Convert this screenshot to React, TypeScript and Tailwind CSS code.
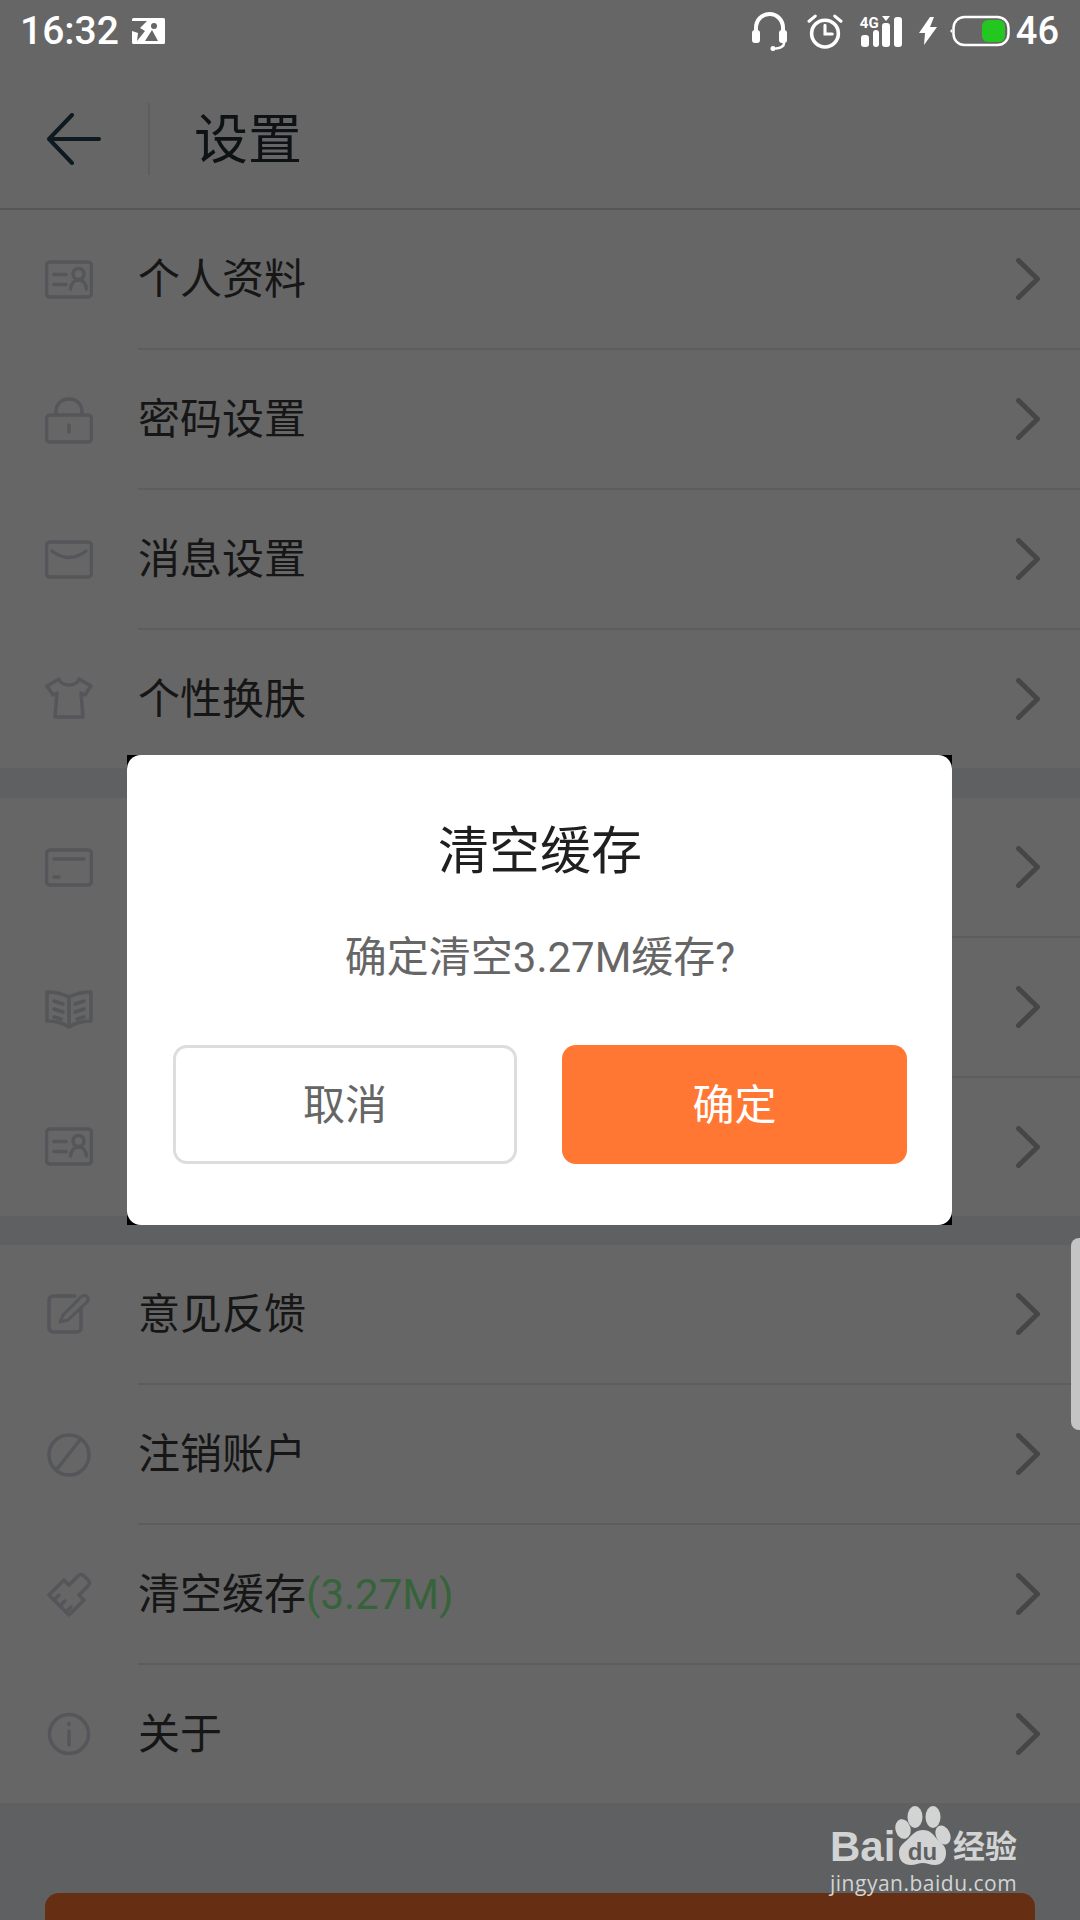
import type { ReactNode } from "react";

const Svg = ({ children }: { children: ReactNode }) => (
  <svg viewBox="0 0 48 48" className="w-[48px] h-[48px] shrink-0" fill="none" stroke="#55565a" strokeWidth="3.500" strokeLinecap="round" strokeLinejoin="round">
    {children}
  </svg>
);

const IdCard = () => (
  <Svg>
    <rect x="1.500" y="6" width="45" height="35" rx="3.500" />
    <path d="M9 18.500h12M9 28.500h12" />
    <circle cx="33.500" cy="18" r="5.500" />
    <path d="M25.500 33c.6-5.500 3.600-9 8-9s7.400 3.500 8 9" />
  </Svg>
);

const Lock = () => (
  <Svg>
    <rect x="1.500" y="19" width="45" height="27" rx="3.500" />
    <path d="M11 19v-3c0-8 5.500-13 13-13s13 5 13 13v3" />
    <path d="M24 29v7" />
  </Svg>
);

const Mail = () => (
  <Svg>
    <rect x="1.500" y="6" width="45" height="35" rx="3.500" />
    <path d="M7 15c5 4 11 6.500 17 6.500S36 19 41 15" />
  </Svg>
);

const Shirt = () => (
  <Svg>
    <path d="M14 4L2 11l6 9 4-2-2 24h28l-2-24 4 2 6-9-12-7c-1.500 4-5 6-10 6s-8.500-2-10-6z" />
  </Svg>
);

const Card = () => (
  <Svg>
    <rect x="1.500" y="6" width="45" height="35" rx="3.500" />
    <path d="M9 15h30M9 33h5" />
  </Svg>
);

const Book = () => (
  <Svg>
    <path d="M24 13c-6-3-14-5-22-5v29c8 0 16 2 22 6 6-4 14-6 22-6V8c-8 0-16 2-22 5zM24 13v30" />
    <path d="M9 17l9 3M9 25l9 3M9 33l7 2M39 17l-9 3M39 25l-9 3M39 33l-7 2" />
  </Svg>
);

const Edit = () => (
  <Svg>
    <path d="M30 5H8a4 4 0 0 0-4 4v28a4 4 0 0 0 4 4h24a4 4 0 0 0 4-4V17" />
    <path d="M15 31l3-7L36 6c2-2 4-2 6-.5 1.500 1.500 1.500 3.500 0 5.500L23 29l-8 2z" strokeWidth="3" />
  </Svg>
);

const Ban = () => (
  <Svg>
    <circle cx="24" cy="24" r="20" />
    <path d="M35 9L12 38" />
  </Svg>
);

const Brush = () => (
  <Svg>
    <path d="M4 24L19 9l5 5 9-9c2-2 4-2 6 0l4 4c2 2 2 4 0 6l-9 9 5 5-15 15z" />
    <path d="M10 30l5-5M16 36l5-5M22 42l5-5" transform="translate(-1 -1)" />
  </Svg>
);

const Info = () => (
  <Svg>
    <circle cx="24" cy="24" r="19.500" />
    <path d="M24 21v14" />
    <path d="M24 13.500v1" strokeWidth="3.500" />
  </Svg>
);

const Chevron = () => (
  <svg viewBox="0 0 24 42" className="w-[24px] h-[42px] shrink-0" fill="none" stroke="#464646" strokeWidth="5" strokeLinecap="round" strokeLinejoin="round">
    <path d="M2.500 2.500L21.500 21L2.500 39.500" />
  </svg>
);

type Item = { id: string; icon: ReactNode; label?: string; extra?: string };

const groupA: Item[] = [
  { id: "profile", icon: <IdCard />, label: "个人资料" },
  { id: "password", icon: <Lock />, label: "密码设置" },
  { id: "message", icon: <Mail />, label: "消息设置" },
  { id: "skin", icon: <Shirt />, label: "个性换肤" },
];

// labels of these rows are covered by the dialog
const groupB: Item[] = [
  { id: "card", icon: <Card /> },
  { id: "book", icon: <Book /> },
  { id: "id", icon: <IdCard /> },
];

const groupC: Item[] = [
  { id: "feedback", icon: <Edit />, label: "意见反馈" },
  { id: "close", icon: <Ban />, label: "注销账户" },
  { id: "cache", icon: <Brush />, label: "清空缓存", extra: "(3.27M)" },
  { id: "about", icon: <Info />, label: "关于" },
];

function Group({ items }: { items: Item[] }) {
  return (
    <div className="bg-[#666666]">
      {items.map((item, i) => {
        const last = i === items.length - 1;
        return (
          <div key={item.id} className={`flex items-center pl-[45px] ${last ? "h-[138px]" : "h-[140px]"}`}>
            {item.icon}
            <div className={`ml-[45px] flex-1 h-full flex items-center justify-between pr-[40px] ${last ? "" : "border-b-2 border-[#5d5d5d]"}`}>
              <span className="pt-[2px] text-[42px] leading-none text-[#161616]">
                {item.label}
                {item.extra && <span className="text-[#37633a]">{item.extra}</span>}
              </span>
              <Chevron />
            </div>
          </div>
        );
      })}
    </div>
  );
}

function StatusBar() {
  return (
    <div className="h-[62px] flex items-center justify-between pl-[20px] pr-[21px] text-white font-medium">
      <div className="flex items-center gap-[13px]">
        <span className="text-[39px] leading-none">16:32</span>
        <svg viewBox="0 0 33 26" className="w-[33px] h-[26px]">
          <rect width="33" height="26" rx="1.500" fill="#ffffff" />
          <path d="M0 3h15l-7 7 5 3-8 10 1-8-6-2z" fill="#666666" />
          <circle cx="22" cy="8" r="3" fill="#666666" />
          <path d="M13 23l7-11 6 11z" fill="#666666" />
        </svg>
      </div>
      <div className="flex items-center">
        {/* headset */}
        <svg viewBox="0 0 35 40" className="w-[35px] h-[40px]" fill="none" stroke="#ffffff" strokeLinecap="round">
          <path d="M4 22v-5C4 9 10 3 17.500 3S31 9 31 17v5" strokeWidth="4" />
          <rect x="0" y="19" width="8" height="13" rx="3" fill="#ffffff" stroke="none" />
          <rect x="27" y="19" width="8" height="13" rx="3" fill="#ffffff" stroke="none" />
          <path d="M32 32c0 4-3 5-8 5.500" strokeWidth="2.500" />
          <circle cx="21" cy="37.500" r="2.500" fill="#ffffff" stroke="none" />
        </svg>
        {/* alarm */}
        <svg viewBox="0 0 35 34" className="w-[36px] h-[35px] ml-[20px]" fill="none" stroke="#ffffff" strokeLinecap="round">
          <circle cx="17.500" cy="19" r="13" strokeWidth="3.500" />
          <path d="M17.500 11v8.500h7" strokeWidth="3" />
          <path d="M2 7l6-5M33 7l-6-5" strokeWidth="3" />
        </svg>
        {/* signal */}
        <div className="relative w-[44px] h-[34px] ml-[16px]">
          <span className="absolute left-[1px] top-[2px] text-[15px] leading-none font-bold">4G</span>
          <svg viewBox="0 0 44 34" className="absolute inset-0 w-[44px] h-[34px]" fill="#ffffff">
            <rect x="2" y="21" width="8" height="12" rx="3" />
            <rect x="14" y="16" width="6" height="17" rx="3" />
            <rect x="23" y="9" width="8" height="24" rx="3" />
            <rect x="35" y="3" width="8" height="30" rx="3" />
            <path d="M23 2h8l-4 5z" />
          </svg>
        </div>
        {/* charging bolt */}
        <svg viewBox="0 0 18 28" className="w-[18px] h-[28px] ml-[16px]" fill="#ffffff">
          <path d="M11 0L0 16h6l-1 12L18 10h-7l4-10z" />
        </svg>
        {/* battery */}
        <svg viewBox="0 0 60 32" className="w-[60px] h-[32px] ml-[13px]">
          <path d="M0 16l2-2v4z" fill="#ffffff" />
          <rect x="3.500" y="2" width="55" height="28" rx="11" fill="none" stroke="#ffffff" strokeWidth="2.500" />
          <rect x="32" y="5" width="23" height="22" rx="6" fill="#24c71f" />
        </svg>
        <span className="text-[38px] leading-none ml-[6px]">46</span>
      </div>
    </div>
  );
}

export default function App() {
  return (
    <div className="relative w-[1080px] h-[1920px] overflow-hidden bg-[#5f6062] font-['Roboto','Noto_Sans_CJK_SC',sans-serif]">
      <div className="bg-[#666666]">
        <StatusBar />
        {/* Title bar */}
        <div className="h-[148px] pt-[7px] flex items-center border-b-2 border-[#575757]">
          <svg viewBox="0 0 54 52" className="w-[54px] h-[52px] ml-[47px]" fill="none" stroke="#0f1a20" strokeWidth="4" strokeLinecap="round" strokeLinejoin="round">
            <path d="M25 2L2 26l23 24M2 26h50" />
          </svg>
          <div className="w-[2px] h-[72px] bg-[#5d5d5d] ml-[47px]" />
          <span className="ml-[44px] pt-[4px] text-[54px] leading-none text-[#0d1215]">设置</span>
        </div>
      </div>

      <Group items={groupA} />
      <div className="h-[30px]" />
      <Group items={groupB} />
      <div className="h-[29px]" />
      <Group items={groupC} />

      {/* Bottom button */}
      <div className="mx-[45px] mt-[90px] h-[60px] rounded-t-[14px] bg-[#662f13]" />

      {/* Scroll handle */}
      <div className="absolute right-0 top-[1238px] w-[9px] h-[192px] rounded-l-[8px] bg-[#c4c4c4]" />

      {/* Watermark */}
      <div className="absolute left-[830px] top-[1805px] w-[200px] text-[#d2d4d4]">
        <div className="flex items-end h-[60px]">
          <span className="w-[65px] text-[42px] leading-[36px] font-bold font-['Liberation_Sans',sans-serif]">Bai</span>
          <svg viewBox="0 0 56 60" className="w-[56px] h-[60px]">
            <ellipse cx="20" cy="12" rx="7.500" ry="11" fill="#d2d4d4" />
            <ellipse cx="38" cy="12" rx="7.500" ry="11" fill="#d2d4d4" />
            <ellipse cx="8" cy="24" rx="7.500" ry="10" fill="#d2d4d4" transform="rotate(-15 8 24)" />
            <ellipse cx="48" cy="30" rx="7" ry="10" fill="#d2d4d4" transform="rotate(-25 48 30)" />
            <path d="M4 48c0-7 4-9 9-14 5-5 8-9 15-9s10 4 14 9c5 5 9 7 9 14 0 8-5 12-11 12-5 0-8-2-12-2s-8 2-12 2c-7 0-12-4-12-12z" fill="#d2d4d4" />
            <text x="27.500" y="55" textAnchor="middle" fontSize="24" fontWeight="700" fill="#5f6062" fontFamily="Liberation Sans, sans-serif">du</text>
          </svg>
          <span className="ml-[2px] text-[32px] leading-[36px] font-bold whitespace-nowrap">经验</span>
        </div>
        <div className="mt-[5px] text-[21px] leading-[26px] tracking-[0.5px] whitespace-nowrap font-['Open_Sans',sans-serif]">jingyan.baidu.com</div>
      </div>

      {/* Clear cache dialog */}
      <div className="absolute left-[127px] top-[755px] w-[825px] h-[470px] bg-black">
        <div className="h-full rounded-[14px] bg-white flex flex-col items-center pl-[46px] pr-[45px] pt-[67px]">
          <div className="text-[51px] leading-[60px] text-[#1f1f1f]">清空缓存</div>
          <div className="mt-[51px] text-[42px] leading-[50px] text-[#666666]">确定清空3.27M缓存?</div>
          <div className="mt-[62px] w-full flex justify-between">
            <div className="w-[344px] h-[119px] pt-[2px] rounded-[14px] border-[3px] border-[#dddddd] flex items-center justify-center text-[42px] text-[#666666]">取消</div>
            <div className="w-[345px] h-[119px] pt-[2px] rounded-[14px] bg-[#ff7733] flex items-center justify-center text-[42px] text-white">确定</div>
          </div>
        </div>
      </div>
    </div>
  );
}
